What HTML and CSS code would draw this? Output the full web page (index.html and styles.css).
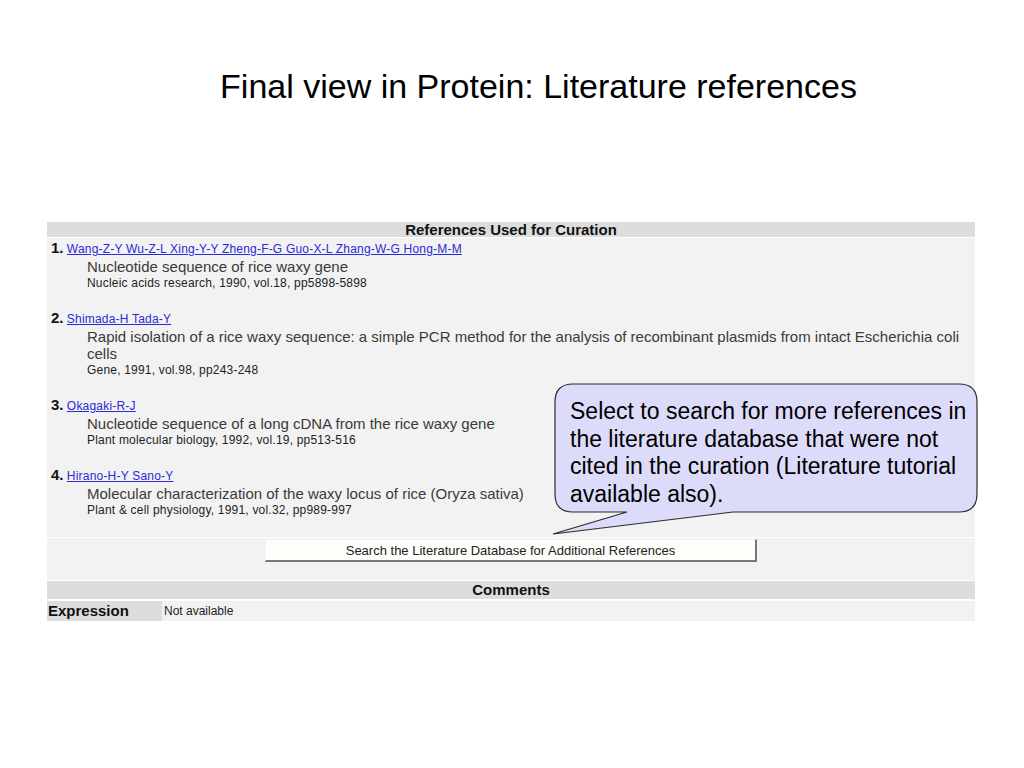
FILE: index.html
```html
<!DOCTYPE html>
<html lang="en">
  <head>
    <meta charset="UTF-8" />
    <meta name="viewport" content="width=device-width, initial-scale=1.0" />
    <title>Final view in Protein: Literature references</title>
    <link rel="stylesheet" href="styles.css">
  </head>
  <body>
    <div class="slide">
      <h1 class="slide-title">Final view in Protein: Literature references</h1>

      <div class="panel">
        <div class="section-head refs-head">References Used for Curation</div>

        <div class="refs">
          <div class="ref">
            <div class="ref-authors"><b>1.</b> <a href="#">Wang-Z-Y Wu-Z-L Xing-Y-Y Zheng-F-G Guo-X-L Zhang-W-G Hong-M-M</a></div>
            <div class="ref-title">Nucleotide sequence of rice waxy gene</div>
            <div class="ref-source">Nucleic acids research, 1990, vol.18, pp5898-5898</div>
          </div>
          <div class="ref">
            <div class="ref-authors"><b>2.</b> <a href="#">Shimada-H Tada-Y</a></div>
            <div class="ref-title">Rapid isolation of a rice waxy sequence: a simple PCR method for the analysis of recombinant plasmids from intact Escherichia coli cells</div>
            <div class="ref-source">Gene, 1991, vol.98, pp243-248</div>
          </div>
          <div class="ref">
            <div class="ref-authors"><b>3.</b> <a href="#">Okagaki-R-J</a></div>
            <div class="ref-title">Nucleotide sequence of a long cDNA from the rice waxy gene</div>
            <div class="ref-source">Plant molecular biology, 1992, vol.19, pp513-516</div>
          </div>
          <div class="ref">
            <div class="ref-authors"><b>4.</b> <a href="#">Hirano-H-Y Sano-Y</a></div>
            <div class="ref-title">Molecular characterization of the waxy locus of rice (Oryza sativa)</div>
            <div class="ref-source">Plant &amp; cell physiology, 1991, vol.32, pp989-997</div>
          </div>
        </div>

        <div class="search-row">
          <button class="search-btn">Search the Literature Database for Additional References</button>
        </div>

        <div class="section-head comments-head">Comments</div>

        <div class="comment-row">
          <div class="comment-label">Expression</div>
          <div class="comment-value">Not available</div>
        </div>
      </div>

      <!-- speech bubble sits over the table -->
      <div class="callout">
        <svg class="callout-shape" width="434" height="160" viewBox="0 0 434 160">
          <path d="M23 4 H409 Q427 4 427 22 V114 Q427 132 409 132 H183 L3 154 L77 132 H23 Q5 132 5 114 V22 Q5 4 23 4 Z"
                fill="#dcdcfa" stroke="#2b2b2b" stroke-width="1.2" />
        </svg>
        <p class="callout-text">Select to search for more references in<br>the literature database that were not<br>cited in the curation (Literature tutorial<br>available also).</p>
      </div>
    </div>
  </body>
</html>
```

FILE: styles.css
```css
/* Reset */
* {
  margin: 0;
  padding: 0;
  box-sizing: border-box;
}

body {
  font-family: "Liberation Sans", Arial, sans-serif;
  background-color: #ffffff;
  color: #000;
}

.slide {
  position: relative;
  width: 1024px;
  height: 768px;
  overflow: hidden;
}

.slide-title {
  padding-top: 67px;
  padding-left: 53px;
  font-size: 34px;
  line-height: 39px;
  font-weight: normal;
  text-align: center;
}

/* Table-like panel */
.panel {
  width: 928px;
  margin: 116px 0 0 47px;
  display: flex;
  flex-direction: column;
}

.section-head {
  background-color: #dddddd;
  font-weight: bold;
  font-size: 15px;
  text-align: center;
  color: #111;
}

.refs-head {
  height: 15px;
  line-height: 15px;
}

.refs {
  margin-top: 1px;
  background-color: #f2f2f2;
  padding: 1px 0 0 4px;
}

.ref {
  margin-bottom: 18px;
}

.ref:last-child {
  margin-bottom: 19px;
}

.ref-authors {
  height: 19px;
  font-size: 12px;
  line-height: 20px;
}

.ref-authors b {
  font-size: 15px;
  line-height: 1;
  color: #111;
}

.ref-authors a {
  line-height: 1;
  letter-spacing: 0.2px;
  color: #2a2ad8;
}

.ref-title {
  padding-left: 36px;
  font-size: 15px;
  line-height: 17px;
  color: #3a3a3a;
}

.ref-source {
  padding-left: 36px;
  font-size: 12px;
  line-height: 16px;
  letter-spacing: 0.2px;
  color: #222;
}

.search-row {
  margin-top: 1px;
  height: 42px;
  padding-top: 1px;
  background-color: #f2f2f2;
  display: flex;
  justify-content: center;
  align-items: flex-start;
}

.search-btn {
  width: 492px;
  height: 23px;
  background-color: #fdfdf9;
  border-style: solid;
  border-width: 1px 2px 2px 1px;
  border-color: #f4f4f4 #777 #777 #f4f4f4;
  font-family: "Liberation Sans", Arial, sans-serif;
  font-size: 13px;
  color: #222;
}

.comments-head {
  margin-top: 1px;
  height: 18px;
  line-height: 18px;
}

.comment-row {
  margin-top: 2px;
  height: 20px;
  display: flex;
  background-color: #f2f2f2;
}

.comment-label {
  width: 115px;
  background-color: #dddddd;
  font-weight: bold;
  font-size: 15px;
  line-height: 20px;
  padding-left: 1px;
  color: #111;
}

.comment-value {
  padding-left: 2px;
  font-size: 12px;
  line-height: 20px;
  color: #222;
}

/* Speech bubble */
.callout {
  position: absolute;
  left: 550px;
  top: 380px;
  width: 434px;
  height: 160px;
}

.callout-shape {
  display: block;
}

.callout-text {
  position: absolute;
  left: 20px;
  top: 18px;
  font-size: 23px;
  line-height: 27.5px;
  white-space: nowrap;
  color: #000;
}
```
